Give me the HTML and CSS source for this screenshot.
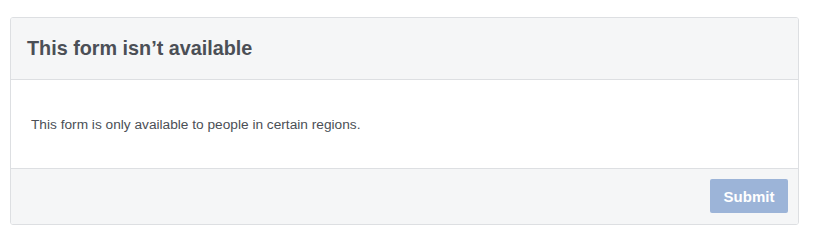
FILE: index.html
```html
<!DOCTYPE html>
<html>
<head>
<meta charset="utf-8">
<link rel="stylesheet" href="styles.css">
</head>
<body>
<div class="card">
  <div class="card-header"><h1 class="title">This form isn’t available</h1></div>
  <div class="card-body"><p class="message">This form is only available to people in certain regions.</p></div>
  <div class="card-footer"><button class="submit" type="button">Submit</button></div>
</div>
</body>
</html>
```
FILE: styles.css
```css
html, body { margin: 0; padding: 0; background: #fff; }
body { padding: 17px 0 0 10px; font-family: "Liberation Sans", Arial, sans-serif; color: #4b4f56; }
.card {
  width: 789px;
  box-sizing: border-box;
  border: 1px solid #dddfe2;
  border-radius: 3px;
  overflow: hidden;
}
.card-header {
  background: #f5f6f7;
  height: 61px;
  border-bottom: 1px solid #dddfe2;
  display: flex;
  align-items: center;
  padding-left: 16px;
}
.title { margin: 0; font-size: 19.8px; font-weight: bold; color: #4b4f56; }
.card-body {
  height: 88px;
  display: flex;
  align-items: center;
  padding-left: 20px;
}
.message { margin: 0; font-size: 13.7px; color: #4b4f56; }
.card-footer {
  background: #f5f6f7;
  border-top: 1px solid #dddfe2;
  height: 56px;
  box-sizing: border-box;
  display: flex;
  justify-content: flex-end;
  align-items: flex-start;
  padding: 10px 10px 0 0;
}
.submit {
  width: 78px;
  height: 34px;
  border: none;
  border-radius: 2px;
  background: #9cb4d8;
  color: #fff;
  font-family: "Liberation Sans", Arial, sans-serif;
  font-size: 15px;
  font-weight: bold;
  padding: 0;
}
```
